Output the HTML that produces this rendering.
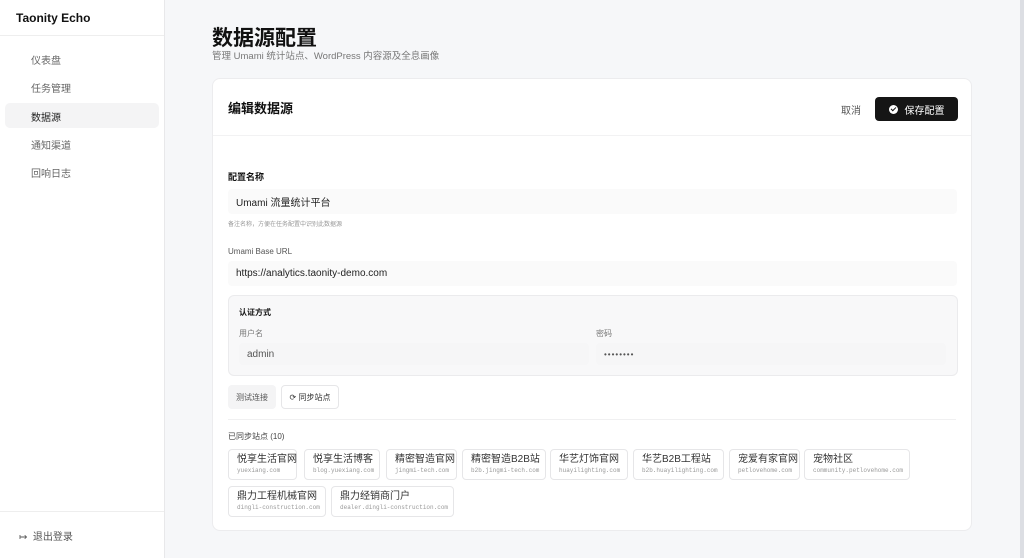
<!DOCTYPE html>
<html><head><meta charset="utf-8"><style>
*{box-sizing:border-box;margin:0;padding:0}
body{width:1024px;height:558px;overflow:hidden;background:#f6f7f9;font-family:"Liberation Sans","Noto Sans CJK SC",sans-serif;color:#222;position:relative}
.abs{position:absolute}
.side{left:0;top:0;width:165px;height:558px;background:#fff;border-right:1px solid #e8e8ea}
.nav{position:absolute;left:31px;font-size:10px;color:#666}
.card{left:212px;top:78px;width:760px;height:453px;background:#fff;border:1px solid #ececee;border-radius:8px}
.inp{position:absolute;background:#fafafa;border-radius:4px;font-size:10px;color:#222;padding-left:8px;display:flex;align-items:center}
.chip{position:absolute;height:31px;border:1px solid #e6e6e8;border-radius:4px;background:#fff;padding:4px 0 0 8px}
.chip b{display:block;font-weight:normal;font-size:10px;color:#333;line-height:12px;white-space:nowrap}
.chip i{display:block;font-style:normal;font-family:"Liberation Mono",monospace;font-size:6px;color:#999;line-height:10px;white-space:nowrap}
</style></head><body>
<div class="abs side">
<div class="abs" style="left:16px;top:11px;font-size:12px;font-weight:bold;color:#111">Taonity Echo</div>
<div class="abs" style="left:0;top:35px;width:164px;border-top:1px solid #eee"></div>
<div class="nav" style="top:52px">仪表盘</div>
<div class="nav" style="top:80px">任务管理</div>
<div class="abs" style="left:5px;top:103px;width:154px;height:25px;background:#f4f4f5;border-radius:5px"></div>
<div class="nav" style="top:109px;color:#222">数据源</div>
<div class="nav" style="top:137px">通知渠道</div>
<div class="nav" style="top:165px">回响日志</div>
<div class="abs" style="left:0;top:511px;width:164px;border-top:1px solid #eee"></div>
<div class="abs" style="left:19px;top:528px;font-size:10px;color:#555">↦&nbsp;&nbsp;退出登录</div>
</div>
<div class="abs" style="left:1020px;top:0;width:4px;height:558px;background:#dcdee3"></div>
<div class="abs" style="left:212px;top:22px;font-size:21px;font-weight:bold;color:#111">数据源配置</div>
<div class="abs" style="left:212px;top:48px;font-size:9.5px;color:#777">管理 Umami 统计站点、WordPress 内容源及全息画像</div>
<div class="abs card">
<div class="abs" style="left:15px;top:19px;font-size:13px;font-weight:bold;color:#111">编辑数据源</div>
<div class="abs" style="left:628px;top:23px;font-size:10px;color:#555">取消</div>
<div class="abs" style="left:662px;top:18px;width:83px;height:24px;background:#151515;border-radius:4px;color:#fff;font-size:10px;display:flex;align-items:center;justify-content:center"><span style="display:inline-block;width:9px;height:9px;border-radius:50%;background:#fff;margin-right:7px;position:relative"><span style="position:absolute;left:2px;top:2px;width:5px;height:3px;border-left:1.3px solid #151515;border-bottom:1.3px solid #151515;transform:rotate(-45deg)"></span></span>保存配置</div>
<div class="abs" style="left:0;top:56px;width:758px;border-top:1px solid #f2f2f3"></div>
<div class="abs" style="left:15px;top:91px;font-size:9px;font-weight:bold;color:#111">配置名称</div>
<div class="inp" style="left:15px;top:110px;width:729px;height:25px">Umami 流量统计平台</div>
<div class="abs" style="left:15px;top:140px;font-size:6px;color:#999">备注名称，方便在任务配置中识别此数据源</div>
<div class="abs" style="left:15px;top:168px;font-size:8px;color:#555">Umami Base URL</div>
<div class="inp" style="left:15px;top:182px;width:729px;height:25px">https://analytics.taonity-demo.com</div>
<div class="abs" style="left:15px;top:216px;width:730px;height:81px;background:#f8f8f9;border:1px solid #ebebed;border-radius:6px">
<div class="abs" style="left:10px;top:11px;font-size:8px;font-weight:bold;color:#111">认证方式</div>
<div class="abs" style="left:10px;top:32px;font-size:8px;color:#777">用户名</div>
<div class="abs" style="left:367px;top:32px;font-size:8px;color:#777">密码</div>
<div class="inp" style="left:10px;top:47px;width:350px;height:22px;background:#f6f6f7;color:#555;padding-left:8px">admin</div>
<div class="inp" style="left:367px;top:47px;width:350px;height:22px;background:#f6f6f7;color:#555;font-size:8px;letter-spacing:1px">••••••••</div>
</div>
<div class="abs" style="left:15px;top:306px;width:48px;height:24px;background:#f4f4f5;border-radius:4px;font-size:8px;color:#555;display:flex;align-items:center;justify-content:center">测试连接</div>
<div class="abs" style="left:68px;top:306px;width:58px;height:24px;border:1px solid #e6e6e8;border-radius:4px;font-size:8px;color:#333;display:flex;align-items:center;justify-content:center">⟳ 同步站点</div>
<div class="abs" style="left:15px;top:340px;width:728px;border-top:1px solid #f0f0f1"></div>
<div class="abs" style="left:15px;top:352px;font-size:8px;color:#444">已同步站点 (10)</div>
</div>
<div class="chip" style="left:228px;top:449px;width:69px"><b>悦享生活官网</b><i>yuexiang.com</i></div>
<div class="chip" style="left:304px;top:449px;width:76px"><b>悦享生活博客</b><i>blog.yuexiang.com</i></div>
<div class="chip" style="left:386px;top:449px;width:71px"><b>精密智造官网</b><i>jingmi-tech.com</i></div>
<div class="chip" style="left:462px;top:449px;width:84px"><b>精密智造B2B站</b><i>b2b.jingmi-tech.com</i></div>
<div class="chip" style="left:550px;top:449px;width:78px"><b>华艺灯饰官网</b><i>huayilighting.com</i></div>
<div class="chip" style="left:633px;top:449px;width:91px"><b>华艺B2B工程站</b><i>b2b.huayilighting.com</i></div>
<div class="chip" style="left:729px;top:449px;width:71px"><b>宠爱有家官网</b><i>petlovehome.com</i></div>
<div class="chip" style="left:804px;top:449px;width:106px"><b>宠物社区</b><i>community.petlovehome.com</i></div>
<div class="chip" style="left:228px;top:486px;width:98px"><b>鼎力工程机械官网</b><i>dingli-construction.com</i></div>
<div class="chip" style="left:331px;top:486px;width:123px"><b>鼎力经销商门户</b><i>dealer.dingli-construction.com</i></div>
</body></html>
